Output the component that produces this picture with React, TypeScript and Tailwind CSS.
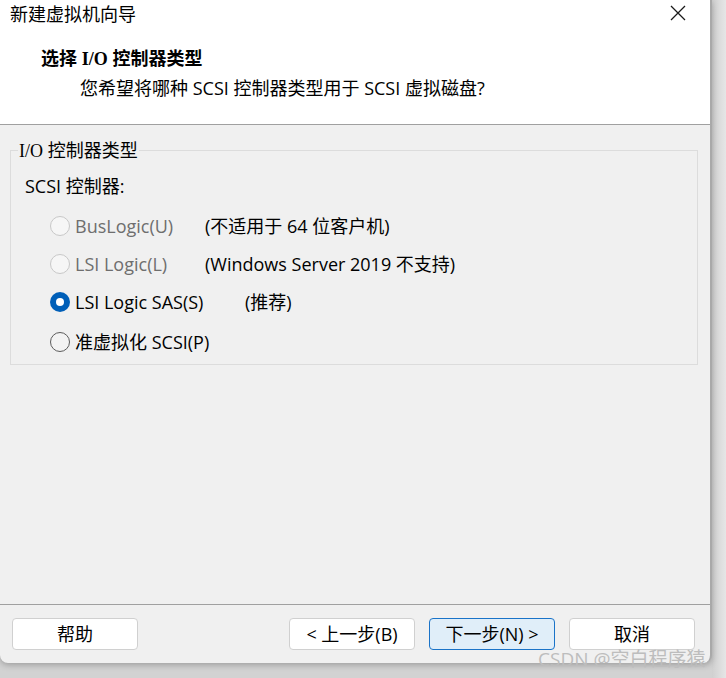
import React from "react";

const font = { fontFamily: '"Open Sans", "Noto Sans CJK SC", sans-serif' };

function Radio({ state }: { state: "disabled" | "checked" | "normal" }) {
  if (state === "checked") {
    return (
      <span className="flex h-[20px] w-[20px] shrink-0 items-center justify-center rounded-full bg-[#005fb8]">
        <span className="h-[8px] w-[8px] rounded-full bg-white" />
      </span>
    );
  }
  if (state === "disabled") {
    return <span className="h-[20px] w-[20px] shrink-0 rounded-full border border-[#c8c8c8] bg-[#f6f6f6]" />;
  }
  return <span className="h-[20px] w-[20px] shrink-0 rounded-full border border-[#5c5c5c] bg-[#f3f3f3]" />;
}

function Row({
  state,
  label,
  desc,
  labelW,
}: {
  state: "disabled" | "checked" | "normal";
  label: string;
  desc?: string;
  labelW: string;
}) {
  return (
    <div className="flex h-[20px] items-center">
      <Radio state={state} />
      <span
        className={`ml-[5px] ${labelW} whitespace-nowrap text-[18px] leading-none ${
          state === "disabled" ? "text-[#6e6e6e]" : "text-black"
        }`}
      >
        {label}
      </span>
      {desc && <span className="whitespace-nowrap text-[18px] leading-none text-black">{desc}</span>}
    </div>
  );
}

function Btn({ children, primary }: { children: React.ReactNode; primary?: boolean }) {
  return (
    <div
      className={`flex h-[32px] w-[126px] items-center justify-center rounded-[4px] border text-[18px] text-black ${
        primary ? "border-[#1a73c8] bg-[#e0eef9]" : "border-[#d0d0d0] bg-white"
      }`}
    >
      {children}
    </div>
  );
}

export default function App() {
  return (
    <div className="relative h-[678px] w-[726px] overflow-hidden bg-[#d2d2d2]" style={font}>
      <div className="absolute right-0 top-0 h-full w-[14px] bg-gradient-to-r from-[#d0d0d0] to-[#e6e6e6]" />
      <div className="relative flex h-[663px] w-[712px] flex-col overflow-hidden rounded-b-[8px] border-r-2 border-[#a9a9a9] bg-[#f0f0f0] shadow-[0_2px_6px_rgba(0,0,0,0.25)]">
        {/* header */}
        <div className="flex h-[125px] flex-col border-b border-[#a0a0a0] bg-white">
          <div className="flex h-[28px] items-center justify-between pl-[10px] pr-[24px]">
            <span className="text-[18px] leading-none text-black">新建虚拟机向导</span>
            <svg width="16" height="16" viewBox="0 0 16 16" className="mt-[-2px]">
              <path d="M1 1 L15 15 M15 1 L1 15" stroke="#1a1a1a" strokeWidth="1.3" />
            </svg>
          </div>
          <div className="ml-[41px] mt-[21px] text-[18px] font-bold leading-none text-black">
            选择 <span style={{ fontFamily: '"Liberation Serif", serif' }}>I/O</span> 控制器类型
          </div>
          <div className="ml-[80px] mt-[11px] text-[18px] leading-none text-black">
            您希望将哪种 SCSI 控制器类型用于 SCSI 虚拟磁盘?
          </div>
        </div>

        {/* body */}
        <div className="flex flex-1 flex-col">
          <div className="relative mx-[10px] mt-[25px] h-[215px] w-[688px] border border-[#dcdcdc]">
            <span className="absolute left-[7px] top-[-12px] bg-[#f0f0f0] px-[1px] text-[18px] leading-[22px] text-black">
              <span style={{ fontFamily: '"Liberation Serif", serif' }}>I/O</span> 控制器类型
            </span>
            <div className="ml-[14px] mt-[26px] text-[18px] leading-none text-black">SCSI 控制器:</div>
            <div className="ml-[39px] mt-[21px] flex flex-col gap-[18px]">
              <Row state="disabled" label="BusLogic(U)" labelW="w-[130px]" desc="(不适用于 64 位客户机)" />
              <Row state="disabled" label="LSI Logic(L)" labelW="w-[130px]" desc="(Windows Server 2019 不支持)" />
              <Row state="checked" label="LSI Logic SAS(S)" labelW="w-[170px]" desc="(推荐)" />
              <div className="mt-[2px]">
                <Row state="normal" label="准虚拟化 SCSI(P)" labelW="w-auto" />
              </div>
            </div>
          </div>
          <div className="flex-1" />
          <div className="border-t border-[#a0a0a0]" />
          <div className="flex h-[58px] items-start pl-[12px] pt-[13px]">
            <Btn>帮助</Btn>
            <div className="ml-[151px] flex gap-[14px]">
              <Btn>&lt; 上一步(B)</Btn>
              <Btn primary>下一步(N) &gt;</Btn>
              <Btn>取消</Btn>
            </div>
          </div>
        </div>
      </div>
      <div className="absolute left-[538px] top-[650px] text-[19px] leading-none text-[#bdbdbd]">
        CSDN @空白程序猿
      </div>
    </div>
  );
}
